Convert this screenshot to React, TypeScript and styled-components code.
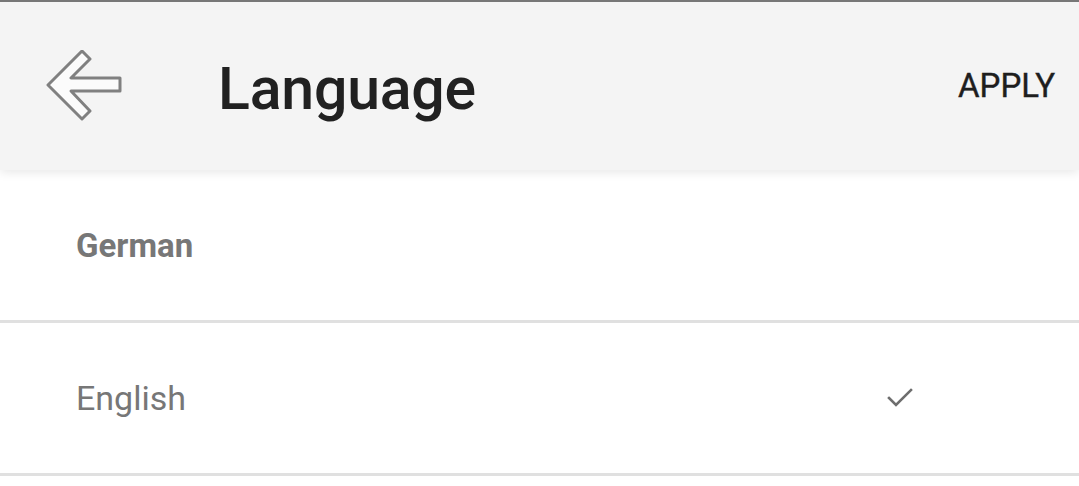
import styled, { createGlobalStyle } from "styled-components";

const GlobalStyle = createGlobalStyle`
  html, body {
    margin: 0;
    padding: 0;
    background: #ffffff;
    font-family: Roboto, "Noto Sans", "Liberation Sans", sans-serif;
  }
`;

const Screen = styled.div`
  width: 1079px;
  min-height: 486px;
  border-top: 2px solid #777777;
  background: #ffffff;
  overflow: hidden;
`;

const AppBar = styled.header`
  position: relative;
  z-index: 1;
  height: 168px;
  display: flex;
  align-items: center;
  padding: 0 24px 0 46px;
  background: #f4f4f4;
  box-shadow: 0 2px 10px rgba(0, 0, 0, 0.1);
`;

const BackButton = styled.button`
  width: 80px;
  height: 74px;
  padding: 0;
  border: none;
  background: none;
  display: flex;
  align-items: center;
  justify-content: flex-start;
  cursor: pointer;
`;

const Title = styled.h1`
  margin: 4px 0 0 92px;
  flex: 1;
  font-size: 59px;
  font-weight: 500;
  color: #212121;
  letter-spacing: -0.2px;
`;

const ApplyButton = styled.button`
  border: none;
  background: none;
  padding: 0;
  font-family: inherit;
  font-size: 33px;
  font-weight: 400;
  color: #1e1e1e;
  -webkit-text-stroke: 0.4px #1e1e1e;
  cursor: pointer;
  margin-top: -2px;
`;

const List = styled.ul`
  list-style: none;
  margin: 0;
  padding: 0;
`;

const Row = styled.li`
  height: 150px;
  display: flex;
  align-items: center;
  padding: 0 164px 0 76px;
  border-bottom: 3px solid #e0e0e0;
`;

const Label = styled.span<{ $bold?: boolean }>`
  flex: 1;
  font-size: ${(p) => (p.$bold ? 33 : 34)}px;
  font-weight: ${(p) => (p.$bold ? 700 : 400)};
  color: #777777;
`;

const languages = [
  { name: "German", bold: true, selected: false },
  { name: "English", bold: false, selected: true },
];

function BackArrow() {
  return (
    <svg width="78" height="72" viewBox="0 0 78 72">
      <polygon
        points="2,35 36,1 44,9 25,28 74,28 74,41 25,41 44,61 36,69"
        fill="#fbfbfb"
        stroke="#808080"
        strokeWidth="3"
        strokeLinejoin="round"
      />
    </svg>
  );
}

function Check() {
  return (
    <svg width="28" height="22" viewBox="0 0 28 22">
      <path
        d="M2 11 L9 18 L24 3"
        fill="none"
        stroke="#6e6e6e"
        strokeWidth="2.6"
        strokeLinecap="square"
      />
    </svg>
  );
}

export default function App() {
  return (
    <>
      <GlobalStyle />
      <Screen>
        <AppBar>
          <BackButton aria-label="Back">
            <BackArrow />
          </BackButton>
          <Title>Language</Title>
          <ApplyButton>APPLY</ApplyButton>
        </AppBar>
        <List>
          {languages.map((lang) => (
            <Row key={lang.name}>
              <Label $bold={lang.bold}>{lang.name}</Label>
              {lang.selected && <Check />}
            </Row>
          ))}
        </List>
      </Screen>
    </>
  );
}
